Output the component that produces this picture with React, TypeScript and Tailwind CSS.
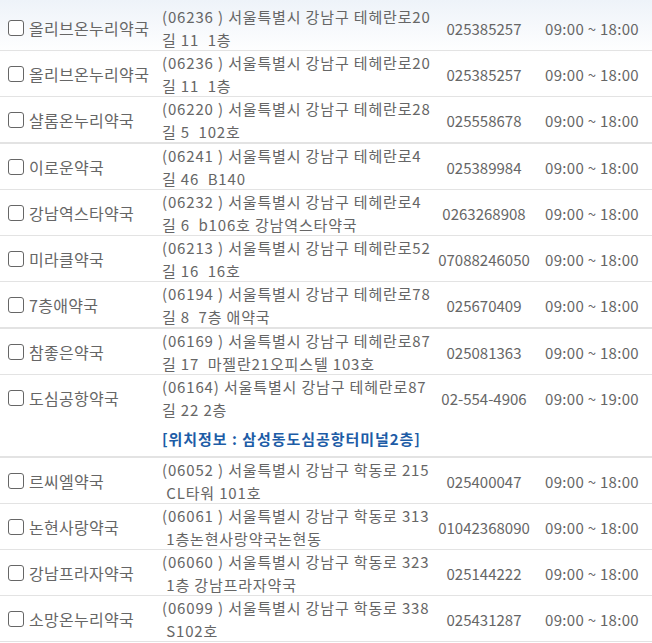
import React from 'react';

type Pharmacy = {
  name: string;
  addr1: string;
  addr2: string;
  phone: string;
  hours: string;
  thick?: boolean;
  note?: string;
};

const list: Pharmacy[] = [
  { name: '올리브온누리약국', addr1: '(06236 ) 서울특별시 강남구 테헤란로20', addr2: '길 11  1층', phone: '025385257', hours: '09:00 ~ 18:00' },
  { name: '올리브온누리약국', addr1: '(06236 ) 서울특별시 강남구 테헤란로20', addr2: '길 11  1층', phone: '025385257', hours: '09:00 ~ 18:00' },
  { name: '샬롬온누리약국', addr1: '(06220 ) 서울특별시 강남구 테헤란로28', addr2: '길 5  102호', phone: '025558678', hours: '09:00 ~ 18:00', thick: true },
  { name: '이로운약국', addr1: '(06241 ) 서울특별시 강남구 테헤란로4', addr2: '길 46  B140', phone: '025389984', hours: '09:00 ~ 18:00' },
  { name: '강남역스타약국', addr1: '(06232 ) 서울특별시 강남구 테헤란로4', addr2: '길 6  b106호 강남역스타약국', phone: '0263268908', hours: '09:00 ~ 18:00' },
  { name: '미라클약국', addr1: '(06213 ) 서울특별시 강남구 테헤란로52', addr2: '길 16  16호', phone: '07088246050', hours: '09:00 ~ 18:00' },
  { name: '7층애약국', addr1: '(06194 ) 서울특별시 강남구 테헤란로78', addr2: '길 8  7층 애약국', phone: '025670409', hours: '09:00 ~ 18:00', thick: true },
  { name: '참좋은약국', addr1: '(06169 ) 서울특별시 강남구 테헤란로87', addr2: '길 17  마젤란21오피스텔 103호', phone: '025081363', hours: '09:00 ~ 18:00' },
  {
    name: '도심공항약국',
    addr1: '(06164) 서울특별시 강남구 테헤란로87',
    addr2: '길 22 2층',
    phone: '02-554-4906',
    hours: '09:00 ~ 19:00',
    thick: true,
    note: '[위치정보 : 삼성동도심공항터미널2층]',
  },
  { name: '르씨엘약국', addr1: '(06052 ) 서울특별시 강남구 학동로 215', addr2: ' CL타워 101호', phone: '025400047', hours: '09:00 ~ 18:00' },
  { name: '논현사랑약국', addr1: '(06061 ) 서울특별시 강남구 학동로 313', addr2: ' 1층논현사랑약국논현동', phone: '01042368090', hours: '09:00 ~ 18:00' },
  { name: '강남프라자약국', addr1: '(06060 ) 서울특별시 강남구 학동로 323', addr2: ' 1층 강남프라자약국', phone: '025144222', hours: '09:00 ~ 18:00' },
  { name: '소망온누리약국', addr1: '(06099 ) 서울특별시 강남구 학동로 338', addr2: ' S102호', phone: '025431287', hours: '09:00 ~ 18:00' },
];

const Row = ({ item }: { item: Pharmacy }) => {
  const main = (
    <div className="flex h-[46px] items-stretch">
      <div className="flex w-[162px] items-center gap-[5px] pl-2">
        <span className="h-4 w-4 shrink-0 rounded-[3px] border-[1.5px] border-[#666] bg-white" />
        <span className="whitespace-nowrap text-[16px] tracking-[0.3px]">{item.name}</span>
      </div>
      <div className="w-[274px] whitespace-pre tracking-[0.85px]">
        <div>{item.addr1}</div>
        <div>{item.addr2}</div>
      </div>
      <div className="flex w-[96px] items-center justify-center whitespace-nowrap">{item.phone}</div>
      <div className="flex flex-1 items-center justify-center whitespace-pre tracking-[0.3px]">{item.hours}</div>
    </div>
  );

  // 위치정보가 있는 행은 아래에 한 줄 더
  if (item.note) {
    return (
      <div className={item.thick ? 'border-b-2 border-[#e3e3e3]' : 'border-b border-[#e3e3e3]'}>
        {main}
        <div className="flex h-[35px] items-center pl-[162px] font-bold tracking-[0.95px] text-[#1d5ca6]">{item.note}</div>
      </div>
    );
  }

  return (
    <div className={item.thick ? 'h-[47px] border-b-2 border-[#e3e3e3]' : 'h-[46px] border-b border-[#e3e3e3]'}>
      {main}
    </div>
  );
};

export default function App() {
  return (
    <div
      className="w-[652px] bg-white pt-[5px] text-[15px] leading-[23px] text-[#666]"
      style={{ fontFamily: '"Noto Sans CJK KR", "Noto Sans", sans-serif' }}
    >
      <div className="pointer-events-none absolute left-0 top-0 h-[55px] w-[652px] bg-gradient-to-b from-[#eef3f9] to-white/0" />
      <div className="relative">
        {list.map((item, i) => (
          <Row key={i} item={item} />
        ))}
      </div>
    </div>
  );
}
